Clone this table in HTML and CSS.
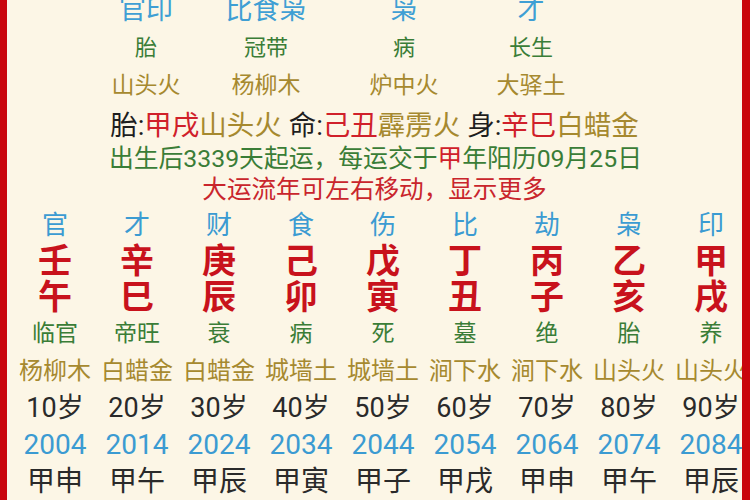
FILE: index.html
```html
<!DOCTYPE html>
<html lang="zh-CN">
<head>
<meta charset="utf-8">
<link rel="stylesheet" href="styles.css">
</head>
<body>
<div class="frame">
  <div class="top-grid">
    <div class="tcol"><div class="t-shen">官印</div><div class="t-state">胎</div><div class="t-nayin">山头火</div></div>
    <div class="tcol"><div class="t-shen">比食枭</div><div class="t-state">冠带</div><div class="t-nayin">杨柳木</div></div>
    <div class="tcol"><div class="t-shen">枭</div><div class="t-state">病</div><div class="t-nayin">炉中火</div></div>
    <div class="tcol"><div class="t-shen">才</div><div class="t-state">长生</div><div class="t-nayin">大驿土</div></div>
  </div>
  <div class="info1">胎:<span class="red">甲戌</span><span class="olive">山头火</span> 命:<span class="red">己丑</span><span class="olive">霹雳火</span> 身:<span class="red">辛巳</span><span class="olive">白蜡金</span></div>
  <div class="info2">出生后3339天起运，每运交于<span class="red">甲</span>年阳历09月25日</div>
  <div class="info3">大运流年可左右移动，显示更多</div>
  <div class="yun-grid">
    <div class="ycol"><div class="y-shen">官</div><div class="y-gan">壬</div><div class="y-zhi">午</div><div class="y-state">临官</div><div class="y-nayin">杨柳木</div><div class="y-age">10岁</div><div class="y-year">2004</div><div class="y-ln">甲申</div></div>
    <div class="ycol"><div class="y-shen">才</div><div class="y-gan">辛</div><div class="y-zhi">巳</div><div class="y-state">帝旺</div><div class="y-nayin">白蜡金</div><div class="y-age">20岁</div><div class="y-year">2014</div><div class="y-ln">甲午</div></div>
    <div class="ycol"><div class="y-shen">财</div><div class="y-gan">庚</div><div class="y-zhi">辰</div><div class="y-state">衰</div><div class="y-nayin">白蜡金</div><div class="y-age">30岁</div><div class="y-year">2024</div><div class="y-ln">甲辰</div></div>
    <div class="ycol"><div class="y-shen">食</div><div class="y-gan">己</div><div class="y-zhi">卯</div><div class="y-state">病</div><div class="y-nayin">城墙土</div><div class="y-age">40岁</div><div class="y-year">2034</div><div class="y-ln">甲寅</div></div>
    <div class="ycol"><div class="y-shen">伤</div><div class="y-gan">戊</div><div class="y-zhi">寅</div><div class="y-state">死</div><div class="y-nayin">城墙土</div><div class="y-age">50岁</div><div class="y-year">2044</div><div class="y-ln">甲子</div></div>
    <div class="ycol"><div class="y-shen">比</div><div class="y-gan">丁</div><div class="y-zhi">丑</div><div class="y-state">墓</div><div class="y-nayin">涧下水</div><div class="y-age">60岁</div><div class="y-year">2054</div><div class="y-ln">甲戌</div></div>
    <div class="ycol"><div class="y-shen">劫</div><div class="y-gan">丙</div><div class="y-zhi">子</div><div class="y-state">绝</div><div class="y-nayin">涧下水</div><div class="y-age">70岁</div><div class="y-year">2064</div><div class="y-ln">甲申</div></div>
    <div class="ycol"><div class="y-shen">枭</div><div class="y-gan">乙</div><div class="y-zhi">亥</div><div class="y-state">胎</div><div class="y-nayin">山头火</div><div class="y-age">80岁</div><div class="y-year">2074</div><div class="y-ln">甲午</div></div>
    <div class="ycol"><div class="y-shen">印</div><div class="y-gan">甲</div><div class="y-zhi">戌</div><div class="y-state">养</div><div class="y-nayin">山头火</div><div class="y-age">90岁</div><div class="y-year">2084</div><div class="y-ln">甲辰</div></div>
  </div>
</div>
</body>
</html>
```
FILE: styles.css
```css
html, body {
  margin: 0;
  padding: 0;
}
body {
  font-family: Roboto, "Noto Sans CJK SC", sans-serif;
  background: #fcf6e6;
}
.frame {
  width: 750px;
  height: 500px;
  box-sizing: border-box;
  border-left: 7px solid #c9060c;
  border-right: 8px solid #c9060c;
  background: #fcf6e6;
  overflow: hidden;
}
.top-grid {
  display: grid;
  grid-template-columns: 100px 140px 136px 118px;
  margin-left: 89px;
  margin-top: -8px;
}
.tcol {
  display: flex;
  flex-direction: column;
  align-items: center;
  white-space: nowrap;
}
.t-shen {
  height: 37px;
  line-height: 37px;
  font-size: 27px;
  color: #3f9fd4;
}
.t-state {
  height: 38px;
  line-height: 38px;
  font-size: 22px;
  color: #3a7d37;
}
.t-nayin {
  height: 38px;
  line-height: 38px;
  font-size: 23px;
  color: #a6892f;
}
.info1, .info2, .info3 {
  text-align: center;
  white-space: nowrap;
}
.info1 {
  height: 34px;
  line-height: 34px;
  margin-top: 4px;
  font-size: 27.5px;
  color: #1e1e1e;
}
.info2 {
  height: 31px;
  line-height: 31px;
  font-size: 24.8px;
  color: #3a7d37;
  padding-left: 2px;
}
.info3 {
  height: 31px;
  line-height: 31px;
  font-size: 24.6px;
  color: #c9252c;
}
.red { color: #d0202a; }
.olive { color: #a6892f; }
.yun-grid {
  display: grid;
  grid-template-columns: repeat(9, 82px);
  margin-left: 7px;
  margin-top: 2px;
  width: 738px;
}
.ycol {
  display: flex;
  flex-direction: column;
  align-items: center;
  white-space: nowrap;
}
.y-shen {
  height: 36px;
  line-height: 36px;
  font-size: 26px;
  color: #3b9bd2;
}
.y-gan, .y-zhi {
  height: 36px;
  line-height: 36px;
  font-size: 34px;
  font-weight: bold;
  color: #c8121c;
}
.y-state {
  height: 38px;
  line-height: 38px;
  font-size: 23px;
  color: #3a7d37;
}
.y-nayin {
  height: 36px;
  line-height: 36px;
  font-size: 24px;
  color: #a6892f;
}
.y-age {
  height: 38px;
  line-height: 38px;
  font-size: 27px;
  color: #2a2a2a;
}
.y-year {
  height: 36px;
  line-height: 36px;
  font-size: 28px;
  color: #3b9bd2;
}
.y-ln {
  height: 38px;
  line-height: 38px;
  font-size: 28px;
  color: #2a2a2a;
}
```
